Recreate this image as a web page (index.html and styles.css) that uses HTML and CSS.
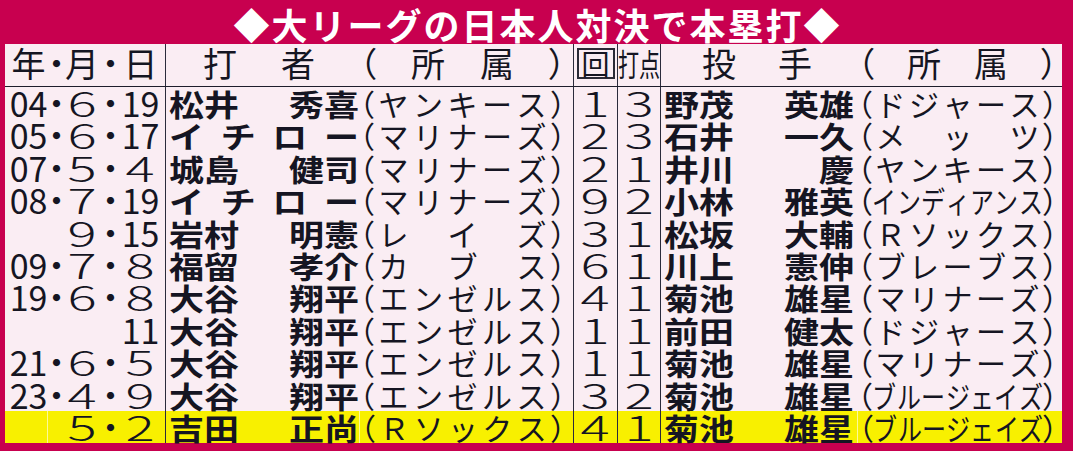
FILE: index.html
```html
<!DOCTYPE html>
<html lang="ja">
<head>
<meta charset="utf-8">
<title>大リーグの日本人対決で本塁打</title>
<link rel="stylesheet" href="styles.css">
</head>
<body>
<div class="title">◆大リーグの日本人対決で本塁打◆</div>
<div class="tbl">
  <div class="row head">
    <div class="c date"><span>年</span><span class="dot">・</span><span>月</span><span class="dot">・</span><span>日</span></div>
    <div class="c per bat"><div class="nm"><span>打</span><span>者</span></div><div class="tm"><span class="po">（</span><span>所</span><span>属</span><span class="pc">）</span></div></div>
    <div class="c num"><span class="kai">回</span></div>
    <div class="c num"><span class="daten">打点</span></div>
    <div class="c per pit"><div class="nm"><span>投</span><span>手</span></div><div class="tm"><span class="po">（</span><span>所</span><span>属</span><span class="pc">）</span></div></div>
  </div>

  <div class="row">
    <div class="c date"><span>04</span><span class="dot">・</span><span><i class="wd">6</i></span><span class="dot">・</span><span>19</span></div>
    <div class="c per bat"><div class="nm"><span>松井</span><span>秀喜</span></div><div class="tm"><span class="po">（</span><span>ヤ</span><span>ン</span><span>キ</span><span>ー</span><span>ス</span><span class="pc">）</span></div></div>
    <div class="c num"><i class="wd">1</i></div>
    <div class="c num"><i class="wd">3</i></div>
    <div class="c per pit"><div class="nm"><span>野茂</span><span>英雄</span></div><div class="tm"><span class="po">（</span><span>ド</span><span>ジ</span><span>ャ</span><span>ー</span><span>ス</span><span class="pc">）</span></div></div>
  </div>

  <div class="row">
    <div class="c date"><span>05</span><span class="dot">・</span><span><i class="wd">6</i></span><span class="dot">・</span><span>17</span></div>
    <div class="c per bat"><div class="nm"><span>イ</span><span>チ</span><span>ロ</span><span>ー</span></div><div class="tm"><span class="po">（</span><span>マ</span><span>リ</span><span>ナ</span><span>ー</span><span>ズ</span><span class="pc">）</span></div></div>
    <div class="c num"><i class="wd">2</i></div>
    <div class="c num"><i class="wd">3</i></div>
    <div class="c per pit"><div class="nm"><span>石井</span><span>一久</span></div><div class="tm"><span class="po">（</span><span>メ</span><span>　</span><span>ッ</span><span>　</span><span>ツ</span><span class="pc">）</span></div></div>
  </div>

  <div class="row">
    <div class="c date"><span>07</span><span class="dot">・</span><span><i class="wd">5</i></span><span class="dot">・</span><span><i class="wd">4</i></span></div>
    <div class="c per bat"><div class="nm"><span>城島</span><span>健司</span></div><div class="tm"><span class="po">（</span><span>マ</span><span>リ</span><span>ナ</span><span>ー</span><span>ズ</span><span class="pc">）</span></div></div>
    <div class="c num"><i class="wd">2</i></div>
    <div class="c num"><i class="wd">1</i></div>
    <div class="c per pit"><div class="nm"><span>井川</span><span>慶</span></div><div class="tm"><span class="po">（</span><span>ヤ</span><span>ン</span><span>キ</span><span>ー</span><span>ス</span><span class="pc">）</span></div></div>
  </div>

  <div class="row">
    <div class="c date"><span>08</span><span class="dot">・</span><span><i class="wd">7</i></span><span class="dot">・</span><span>19</span></div>
    <div class="c per bat"><div class="nm"><span>イ</span><span>チ</span><span>ロ</span><span>ー</span></div><div class="tm"><span class="po">（</span><span>マ</span><span>リ</span><span>ナ</span><span>ー</span><span>ズ</span><span class="pc">）</span></div></div>
    <div class="c num"><i class="wd">9</i></div>
    <div class="c num"><i class="wd">2</i></div>
    <div class="c per pit"><div class="nm"><span>小林</span><span>雅英</span></div><div class="tm long"><span class="po">（</span><span>イ</span><span>ン</span><span>デ</span><span>ィ</span><span>ア</span><span>ン</span><span>ス</span><span class="pc">）</span></div></div>
  </div>

  <div class="row">
    <div class="c date"><span></span><span></span><span><i class="wd">9</i></span><span class="dot">・</span><span>15</span></div>
    <div class="c per bat"><div class="nm"><span>岩村</span><span>明憲</span></div><div class="tm"><span class="po">（</span><span>レ</span><span>　</span><span>イ</span><span>　</span><span>ズ</span><span class="pc">）</span></div></div>
    <div class="c num"><i class="wd">3</i></div>
    <div class="c num"><i class="wd">1</i></div>
    <div class="c per pit"><div class="nm"><span>松坂</span><span>大輔</span></div><div class="tm"><span class="po">（</span><span>Ｒ</span><span>ソ</span><span>ッ</span><span>ク</span><span>ス</span><span class="pc">）</span></div></div>
  </div>

  <div class="row">
    <div class="c date"><span>09</span><span class="dot">・</span><span><i class="wd">7</i></span><span class="dot">・</span><span><i class="wd">8</i></span></div>
    <div class="c per bat"><div class="nm"><span>福留</span><span>孝介</span></div><div class="tm"><span class="po">（</span><span>カ</span><span>　</span><span>ブ</span><span>　</span><span>ス</span><span class="pc">）</span></div></div>
    <div class="c num"><i class="wd">6</i></div>
    <div class="c num"><i class="wd">1</i></div>
    <div class="c per pit"><div class="nm"><span>川上</span><span>憲伸</span></div><div class="tm"><span class="po">（</span><span>ブ</span><span>レ</span><span>ー</span><span>ブ</span><span>ス</span><span class="pc">）</span></div></div>
  </div>

  <div class="row">
    <div class="c date"><span>19</span><span class="dot">・</span><span><i class="wd">6</i></span><span class="dot">・</span><span><i class="wd">8</i></span></div>
    <div class="c per bat"><div class="nm"><span>大谷</span><span>翔平</span></div><div class="tm"><span class="po">（</span><span>エ</span><span>ン</span><span>ゼ</span><span>ル</span><span>ス</span><span class="pc">）</span></div></div>
    <div class="c num"><i class="wd">4</i></div>
    <div class="c num"><i class="wd">1</i></div>
    <div class="c per pit"><div class="nm"><span>菊池</span><span>雄星</span></div><div class="tm"><span class="po">（</span><span>マ</span><span>リ</span><span>ナ</span><span>ー</span><span>ズ</span><span class="pc">）</span></div></div>
  </div>

  <div class="row">
    <div class="c date"><span></span><span></span><span></span><span></span><span>11</span></div>
    <div class="c per bat"><div class="nm"><span>大谷</span><span>翔平</span></div><div class="tm"><span class="po">（</span><span>エ</span><span>ン</span><span>ゼ</span><span>ル</span><span>ス</span><span class="pc">）</span></div></div>
    <div class="c num"><i class="wd">1</i></div>
    <div class="c num"><i class="wd">1</i></div>
    <div class="c per pit"><div class="nm"><span>前田</span><span>健太</span></div><div class="tm"><span class="po">（</span><span>ド</span><span>ジ</span><span>ャ</span><span>ー</span><span>ス</span><span class="pc">）</span></div></div>
  </div>

  <div class="row">
    <div class="c date"><span>21</span><span class="dot">・</span><span><i class="wd">6</i></span><span class="dot">・</span><span><i class="wd">5</i></span></div>
    <div class="c per bat"><div class="nm"><span>大谷</span><span>翔平</span></div><div class="tm"><span class="po">（</span><span>エ</span><span>ン</span><span>ゼ</span><span>ル</span><span>ス</span><span class="pc">）</span></div></div>
    <div class="c num"><i class="wd">1</i></div>
    <div class="c num"><i class="wd">1</i></div>
    <div class="c per pit"><div class="nm"><span>菊池</span><span>雄星</span></div><div class="tm"><span class="po">（</span><span>マ</span><span>リ</span><span>ナ</span><span>ー</span><span>ズ</span><span class="pc">）</span></div></div>
  </div>

  <div class="row">
    <div class="c date"><span>23</span><span class="dot">・</span><span><i class="wd">4</i></span><span class="dot">・</span><span><i class="wd">9</i></span></div>
    <div class="c per bat"><div class="nm"><span>大谷</span><span>翔平</span></div><div class="tm"><span class="po">（</span><span>エ</span><span>ン</span><span>ゼ</span><span>ル</span><span>ス</span><span class="pc">）</span></div></div>
    <div class="c num"><i class="wd">3</i></div>
    <div class="c num"><i class="wd">2</i></div>
    <div class="c per pit"><div class="nm"><span>菊池</span><span>雄星</span></div><div class="tm long"><span class="po">（</span><span>ブ</span><span>ル</span><span>ー</span><span>ジ</span><span>ェ</span><span>イ</span><span>ズ</span><span class="pc">）</span></div></div>
  </div>

  <div class="row hl">
    <div class="c date"><span></span><span class="sep"></span><span><i class="wd">5</i></span><span class="dot">・</span><span><i class="wd">2</i></span></div>
    <div class="c per bat"><div class="nm"><span>吉田</span><span>正尚</span></div><div class="tm sep"><span class="po">（</span><span>Ｒ</span><span>ソ</span><span>ッ</span><span>ク</span><span>ス</span><span class="pc">）</span></div></div>
    <div class="c num"><i class="wd">4</i></div>
    <div class="c num"><i class="wd">1</i></div>
    <div class="c per pit"><div class="nm"><span>菊池</span><span>雄星</span></div><div class="tm long sep"><span class="po">（</span><span>ブ</span><span>ル</span><span>ー</span><span>ジ</span><span>ェ</span><span>イ</span><span>ズ</span><span class="pc">）</span></div></div>
  </div>
</div>
</body>
</html>
```

FILE: styles.css
```css
* {
  box-sizing: border-box;
  margin: 0;
  padding: 0;
}

html, body {
  width: 1073px;
  height: 451px;
  overflow: hidden;
}

body {
  background: #c8004f;
  font-family: "Noto Sans CJK JP", "Noto Sans", sans-serif;
  color: #151522;
}

.title {
  height: 44px;
  color: #ffffff;
  font-weight: 700;
  font-size: 36px;
  letter-spacing: 2px;
  line-height: 44px;
  padding-top: 2px;
  padding-left: 2px;
  text-align: center;
  white-space: nowrap;
}

.tbl {
  margin-left: 5px;
  width: 1057px;
  background: #faedf3;
}

.row {
  display: grid;
  grid-template-columns: 160px 408px 44px 43px 402px;
  height: 32.4px;
  line-height: 32.4px;
}

.head {
  height: 43px;
  border-bottom: 1px solid #1d1d2b;
  line-height: 38px;
}

.c {
  border-left: 1px solid #2b2b3b;
  display: flex;
  align-items: center;
  overflow: visible;
  white-space: nowrap;
}

.c:first-child {
  border-left: none;
}

.head .c {
  padding-bottom: 4px;
}

.date {
  display: grid;
  grid-template-columns: 37px 19px 32px 25px 35px;
  align-items: center;
  padding-left: 5px;
  font-size: 34px;
}

.date span {
  display: flex;
  justify-content: center;
  height: 100%;
  align-items: center;
}

.date .dot {
  font-feature-settings: "palt";
}

.wd {
  display: inline-block;
  font-style: normal;
  font-weight: 300;
  transform: scaleX(1.6);
}

.num {
  justify-content: center;
  font-size: 34px;
}

.per {
  padding-left: 3px;
}

.nm {
  width: 190px;
  display: flex;
  justify-content: space-between;
  font-weight: 700;
  font-size: 35px;
  transform: scaleY(0.86);
}

.tm {
  width: 207px;
  height: 100%;
  display: flex;
  align-items: center;
  justify-content: space-between;
  font-size: 30px;
}

.pit .tm {
  width: 201px;
  margin-left: 3px;
}

.po, .pc {
  font-feature-settings: "palt";
}

.tm.long span:not(.po):not(.pc) {
  width: 24px;
  display: flex;
  justify-content: center;
  transform: scaleX(0.8);
}

.head .nm {
  font-weight: 400;
  font-size: 34px;
  transform: none;
}

.head .bat .nm {
  padding: 0 44px 0 34px;
}

.head .pit .nm {
  padding: 0 42px 0 38px;
}

.head .tm {
  font-size: 34px;
}

.kai {
  width: 38px;
  height: 31px;
  border: 2px solid #2a2a36;
  display: flex;
  align-items: center;
  justify-content: center;
  font-size: 28px;
  line-height: 1;
}

.daten {
  display: inline-block;
  font-size: 31px;
  transform: scaleX(0.68);
}

.hl {
  background: #f8f000;
}

.hl .sep {
  border-left: 1px solid rgba(255, 255, 255, 0.6);
}
```
